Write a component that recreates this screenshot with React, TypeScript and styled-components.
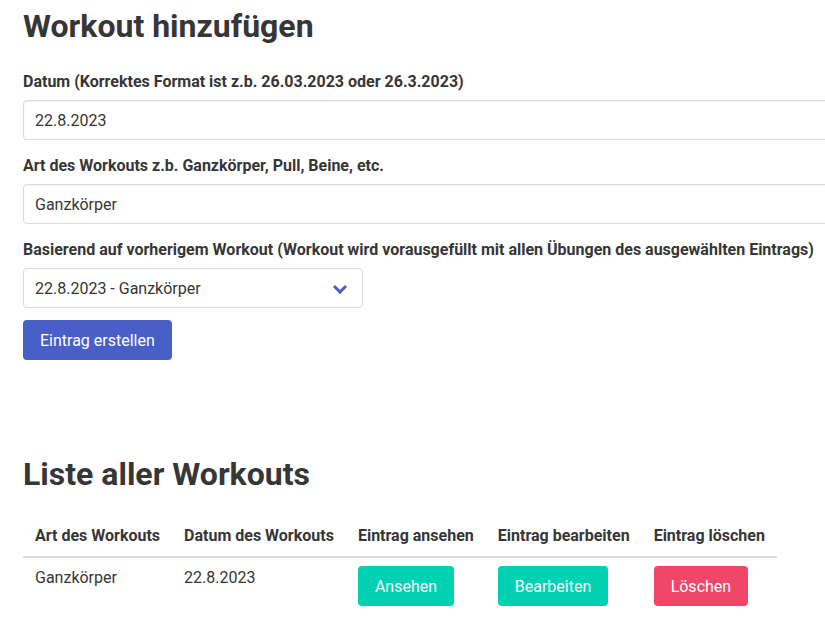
import React from "react";
import styled, { createGlobalStyle } from "styled-components";

const GlobalStyle = createGlobalStyle`
  html, body { margin: 0; padding: 0; overflow: hidden; background: #fff; }
  body {
    font-family: Roboto, "Liberation Sans", sans-serif;
    font-size: 16px;
    line-height: 1.5;
    color: #4a4a4a;
  }
  * { box-sizing: border-box; }
`;

const Page = styled.div`
  padding: 8px 0 0 23px;
`;

const Section = styled.section<{ $gap?: number }>`
  margin-bottom: ${(p) => p.$gap ?? 0}px;
`;

const Title = styled.h1`
  margin: 0 0 24px;
  font-size: 32px;
  font-weight: 700;
  line-height: 1.125;
  color: #363636;
`;

const Form = styled.form`
  width: 900px;
`;

const Field = styled.div`
  margin-bottom: 12px;
`;

const Label = styled.label`
  display: block;
  padding-top: 2px;
  margin-bottom: 6px;
  font-size: 16px;
  font-weight: 700;
  color: #363636;
`;

const Input = styled.input`
  display: block;
  width: 100%;
  height: 40px;
  padding: 7px 11px;
  font-family: inherit;
  font-size: 16px;
  line-height: 1.5;
  color: #363636;
  background: #fff;
  border: 1px solid #dbdbdb;
  border-radius: 4px;
  box-shadow: inset 0 1px 2px rgba(10, 10, 10, 0.05);
  outline: none;
`;

const SelectWrap = styled.div`
  position: relative;
  width: 340px;
  &::after {
    content: "";
    position: absolute;
    top: 50%;
    right: 18px;
    width: 7px;
    height: 7px;
    margin-top: -6px;
    border: 3px solid #485fc7;
    border-top: 0;
    border-right: 0;
    transform: rotate(-45deg);
    pointer-events: none;
  }
`;

const Select = styled.select`
  display: block;
  width: 100%;
  height: 40px;
  padding: 8px 40px 6px 11px;
  font-family: inherit;
  font-size: 16px;
  line-height: 1.5;
  color: #363636;
  background: #fff;
  border: 1px solid #dbdbdb;
  border-radius: 4px;
  appearance: none;
  outline: none;
`;

const Button = styled.button<{ $color: string }>`
  display: inline-flex;
  align-items: center;
  justify-content: center;
  height: 40px;
  padding: 8px 16px 6px;
  font-family: inherit;
  font-size: 16px;
  line-height: 1.5;
  color: #fff;
  background: ${(p) => p.$color};
  border: 1px solid transparent;
  border-radius: 4px;
  cursor: pointer;
`;

const Table = styled.table`
  border-collapse: collapse;
  border-spacing: 0;
  color: #363636;
`;

const Th = styled.th`
  padding: 8px 12px;
  text-align: left;
  font-weight: 700;
  border-bottom: 2px solid #dbdbdb;
  vertical-align: top;
`;

const Td = styled.td`
  padding: 8px 12px;
  vertical-align: top;
`;

export default function App() {
  return (
    <Page>
      <GlobalStyle />
      <Section $gap={96}>
        <Title>Workout hinzufügen</Title>
        <Form onSubmit={(e) => e.preventDefault()}>
          <Field>
            <Label>Datum (Korrektes Format ist z.b. 26.03.2023 oder 26.3.2023)</Label>
            <Input defaultValue="22.8.2023" />
          </Field>
          <Field>
            <Label>Art des Workouts z.b. Ganzkörper, Pull, Beine, etc.</Label>
            <Input defaultValue="Ganzkörper" />
          </Field>
          <Field>
            <Label>
              Basierend auf vorherigem Workout (Workout wird vorausgefüllt mit allen Übungen des ausgewählten Eintrags)
            </Label>
            <SelectWrap>
              <Select defaultValue="1">
                <option value="1">22.8.2023 - Ganzkörper</option>
              </Select>
            </SelectWrap>
          </Field>
          <Button $color="#485fc7" type="submit">Eintrag erstellen</Button>
        </Form>
      </Section>
      <Section>
        <Title>Liste aller Workouts</Title>
        <Table>
          <thead>
            <tr>
              <Th>Art des Workouts</Th>
              <Th>Datum des Workouts</Th>
              <Th>Eintrag ansehen</Th>
              <Th>Eintrag bearbeiten</Th>
              <Th>Eintrag löschen</Th>
            </tr>
          </thead>
          <tbody>
            <tr>
              <Td>Ganzkörper</Td>
              <Td>22.8.2023</Td>
              <Td><Button $color="#00d1b2">Ansehen</Button></Td>
              <Td><Button $color="#00d1b2">Bearbeiten</Button></Td>
              <Td><Button $color="#f14668">Löschen</Button></Td>
            </tr>
          </tbody>
        </Table>
      </Section>
    </Page>
  );
}
